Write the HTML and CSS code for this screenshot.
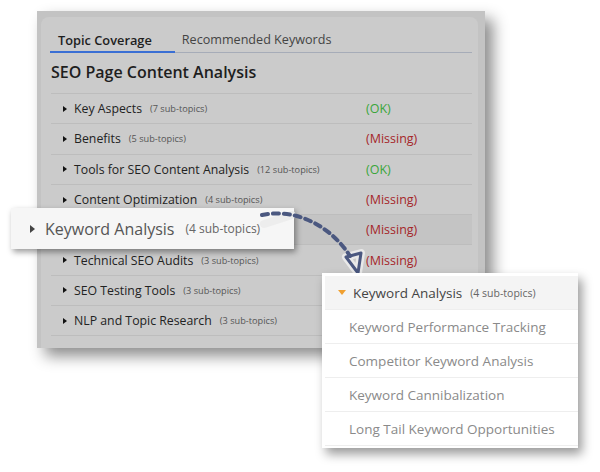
FILE: index.html
```html
<!DOCTYPE html>
<html>
<head>
<meta charset="utf-8">
<link rel="stylesheet" href="styles.css">
</head>
<body>
<div class="stage">
  <div class="panel">
    <div class="card">
      <div class="tabs">
        <div class="tab active">Topic Coverage</div>
        <div class="tab">Recommended Keywords</div>
        <div class="tab-rest"></div>
      </div>
      <h1 class="title">SEO Page Content Analysis</h1>
      <div class="rows">
        <div class="row"><span class="tri"></span><span class="name">Key Aspects</span><span class="count">(7 sub-topics)</span><span class="status ok">(OK)</span></div>
        <div class="row"><span class="tri"></span><span class="name">Benefits</span><span class="count">(5 sub-topics)</span><span class="status miss">(Missing)</span></div>
        <div class="row"><span class="tri"></span><span class="name">Tools for SEO Content Analysis</span><span class="count">(12 sub-topics)</span><span class="status ok">(OK)</span></div>
        <div class="row"><span class="tri"></span><span class="name">Content Optimization</span><span class="count">(4 sub-topics)</span><span class="status miss">(Missing)</span></div>
        <div class="row hl"><span class="tri covered"></span><span class="name covered">Keyword Analysis</span><span class="count covered">(4 sub-topics)</span><span class="status miss">(Missing)</span></div>
        <div class="row"><span class="tri"></span><span class="name">Technical SEO Audits</span><span class="count">(3 sub-topics)</span><span class="status miss">(Missing)</span></div>
        <div class="row"><span class="tri"></span><span class="name">SEO Testing Tools</span><span class="count">(3 sub-topics)</span><span class="status"></span></div>
        <div class="row"><span class="tri"></span><span class="name">NLP and Topic Research</span><span class="count">(3 sub-topics)</span><span class="status"></span></div>
      </div>
    </div>
  </div>

  <div class="zoomcard">
    <span class="tri big"></span><span class="zname">Keyword Analysis</span><span class="zcount">(4 sub-topics)</span>
  </div>

  <svg class="arrow" width="600" height="472" viewBox="0 0 600 472">
    <path d="M264 224 L292 215" stroke="rgba(235,235,235,0.85)" stroke-width="8" stroke-linecap="round" fill="none"/>
    <path d="M346 257 L361 253 L358 273 Z" stroke="rgba(240,240,240,0.8)" stroke-width="8" stroke-linejoin="round" fill="none"/>
    <path d="M262 215 C 295 208, 330 225, 350 256" stroke="#4b5880" stroke-width="4" stroke-dasharray="6 5" stroke-linecap="round" fill="none"/>
    <path d="M346 257 L361 253 L358 273 Z" stroke="#4b5880" stroke-width="3" stroke-linejoin="round" fill="none"/>
  </svg>

  <div class="dropdown">
    <div class="dd-head"><span class="otri"></span><span class="dname">Keyword Analysis</span><span class="dcount">(4 sub-topics)</span></div>
    <div class="dd-item">Keyword Performance Tracking</div>
    <div class="dd-item">Competitor Keyword Analysis</div>
    <div class="dd-item">Keyword Cannibalization</div>
    <div class="dd-item">Long Tail Keyword Opportunities</div>
  </div>
</div>
</body>
</html>
```

FILE: styles.css
```css
* { box-sizing: border-box; }
body {
  margin: 0;
  background: #ffffff;
  font-family: "Open Sans", "Noto Sans", sans-serif;
}
.stage {
  position: relative;
  width: 600px;
  height: 472px;
  overflow: hidden;
  padding-top: 11px;
}
.panel {
  margin-left: 37px;
  width: 448px;
  height: 337px;
  background: #c3c3c3;
  padding: 6px 7px 0 4px;
  box-shadow: 8px 8px 14px rgba(0, 0, 0, 0.45);
}
.card {
  background: #cbcbcb;
  border-radius: 8px 8px 0 0;
  height: 100%;
  padding: 13px 6px 0 9px;
}
.tabs {
  display: flex;
  align-items: flex-end;
}
.tab {
  font-size: 12.6px;
  line-height: 20px;
  color: #444;
  padding: 0 8px 2px 7px;
  border-bottom: 1px solid #a6acb8;
}
.tab.active {
  font-size: 12.8px;
  font-weight: 600;
  color: #1e1e1e;
  padding-left: 8px;
  padding-right: 23px;
  border-bottom: 2px solid #3a6fd4;
  padding-bottom: 1px;
}
.tab-rest {
  flex: 1;
  border-bottom: 1px solid #a6acb8;
}
.title {
  margin: 8px 0 0 1px;
  font-size: 16px;
  font-weight: 600;
  line-height: 22px;
  color: #1e1e1e;
  padding-bottom: 10px;
  border-bottom: 1px solid #bdbdbd;
}
.rows {
  margin-left: 1px;
}
.row {
  display: flex;
  align-items: center;
  height: 30.3px;
  border-bottom: 1px solid #bdbdbd;
  padding-left: 12px;
  position: relative;
}
.row.hl { background: #c4c4c4; }
.covered { visibility: hidden; }
.tri {
  width: 0;
  height: 0;
  border-left: 4px solid #111;
  border-top: 3.5px solid transparent;
  border-bottom: 3.5px solid transparent;
  margin-right: 7px;
}
.name {
  font-size: 12.3px;
  color: #222;
}
.count {
  font-size: 9.2px;
  color: #555;
  margin-left: 8px;
}
.status {
  position: absolute;
  left: 315px;
  font-size: 12.5px;
}
.ok { color: #3aa63a; }
.miss { color: #a5262a; }

.zoomcard {
  position: absolute;
  left: 11px;
  top: 208px;
  width: 283px;
  height: 41px;
  background: #f6f6f6;
  box-shadow: 2px 3px 6px rgba(0, 0, 0, 0.4);
  display: flex;
  align-items: center;
  padding-left: 19px;
}
.tri.big {
  border-left: 5px solid #444;
  border-top: 4.5px solid transparent;
  border-bottom: 4.5px solid transparent;
  margin-right: 10px;
}
.zname {
  font-size: 16px;
  color: #555;
}
.zcount {
  font-size: 12px;
  color: #666;
  margin-left: 11px;
}
.arrow {
  position: absolute;
  left: 0;
  top: 0;
}
.dropdown {
  position: absolute;
  left: 322px;
  top: 273px;
  width: 256px;
  height: 175px;
  background: #ffffff;
  box-shadow: 4px 6px 10px rgba(0, 0, 0, 0.4);
  padding: 3px 0 0 3px;
}
.dd-head {
  height: 34px;
  background: #f4f4f4;
  display: flex;
  align-items: center;
  padding-left: 13px;
  border-bottom: 1px solid #eeeeee;
}
.otri {
  width: 0;
  height: 0;
  border-top: 5px solid #f0a030;
  border-left: 4.5px solid transparent;
  border-right: 4.5px solid transparent;
  margin-right: 7px;
}
.dname {
  font-size: 13.5px;
  color: #444;
}
.dcount {
  font-size: 10.5px;
  color: #666;
  margin-left: 8px;
}
.dd-item {
  height: 34px;
  display: flex;
  align-items: center;
  padding-left: 24px;
  font-size: 13.5px;
  color: #8a8a8a;
  border-bottom: 1px solid #eeeeee;
}
```
